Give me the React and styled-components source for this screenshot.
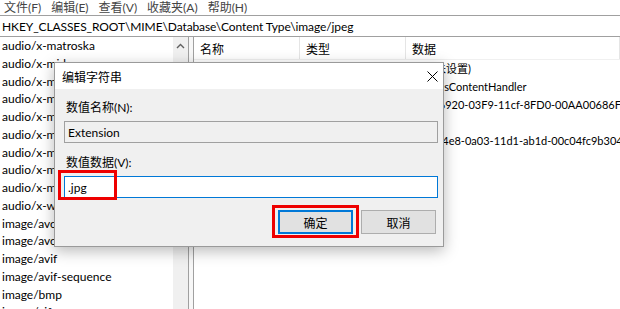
import React from "react";
import styled, { createGlobalStyle } from "styled-components";

const FONT = `"Lato", "Noto Sans CJK SC", sans-serif`;

const Global = createGlobalStyle`
  html, body { margin: 0; padding: 0; background: #fff; }
  body { font-family: ${FONT}; font-size: 12px; color: #000; }
`;

const Window = styled.div`
  position: relative;
  width: 620px;
  height: 309px;
  overflow: hidden;
  background: #fff;
  display: flex;
  flex-direction: column;
`;

const MenuBar = styled.div`
  height: 15px;
  display: flex;
  align-items: center;
  gap: 10px;
  padding-left: 4px;
  color: #444;
  font-size: 12px;
  line-height: 15px;
`;

const MenuItem = styled.span`
  white-space: nowrap;
`;

const AddressBar = styled.div`
  height: 20px;
  border-top: 1px solid #a0a0a0;
  border-bottom: 1px solid #a0a0a0;
  display: flex;
  align-items: center;
  padding-left: 2px;
  font-size: 12px;
  letter-spacing: -0.1px;
  white-space: nowrap;
`;

const Main = styled.div`
  flex: 1;
  display: flex;
  min-height: 0;
`;

const TreePane = styled.div`
  width: 188px;
  display: flex;
  border-right: 1px solid #a0a0a0;
  flex-shrink: 0;
`;

const TreeList = styled.div`
  flex: 1;
  overflow: hidden;
`;

const TreeRow = styled.div`
  height: 17.75px;
  line-height: 17.75px;
  padding-left: 2px;
  white-space: nowrap;
`;

const ScrollBar = styled.div`
  width: 15px;
  background: #f0f0f0;
  display: flex;
  flex-direction: column;
  align-items: center;
`;

const ScrollArrow = styled.div`
  height: 18px;
  display: flex;
  align-items: center;
  justify-content: center;
  width: 100%;
`;

const Splitter = styled.div`
  width: 4px;
  background: #f7f7f7;
  border-right: 1px solid #a0a0a0;
  flex-shrink: 0;
`;

const ValuePane = styled.div`
  flex: 1;
  display: flex;
  flex-direction: column;
  min-width: 0;
`;

const COLS = "106px 106px 1fr";

const HeaderRow = styled.div`
  height: 22px;
  display: grid;
  grid-template-columns: ${COLS};
  border-bottom: 1px solid #f0f0f0;
`;

const HeaderCell = styled.div`
  display: flex;
  align-items: center;
  padding-left: 6px;
  border-right: 1px solid #e5e5e5;
  white-space: nowrap;
  overflow: hidden;
`;

const ValueRow = styled.div`
  height: 18px;
  display: grid;
  grid-template-columns: ${COLS};
  line-height: 18px;
`;

const Cell = styled.div`
  padding-left: ${(p) => (p.$data ? 4 : 6)}px;
  font-size: ${(p) => (p.$data ? 11 : 12)}px;
  white-space: nowrap;
  overflow: hidden;
`;

/* ---------- dialog ---------- */

const Dialog = styled.div`
  position: absolute;
  left: 54px;
  top: 62px;
  width: 388px;
  height: 183px;
  border: 1px solid #9a9a9a;
  background: #f0f0f0;
  box-shadow: 0 4px 14px rgba(0, 0, 0, 0.28);
  display: flex;
  flex-direction: column;
`;

const TitleBar = styled.div`
  height: 26px;
  background: #fff;
  display: flex;
  align-items: center;
  justify-content: space-between;
  padding: 0 5px 0 7px;
  flex-shrink: 0;
`;

const DialogBody = styled.div`
  position: relative;
  flex: 1;
  display: flex;
  flex-direction: column;
  padding: 11px 5px 0 9px;
`;

const Label = styled.div`
  height: 16px;
  line-height: 16px;
  padding-left: 2px;
  margin-top: ${(p) => p.$gap || 0}px;
`;

const Field = styled.div`
  height: 22px;
  box-sizing: border-box;
  margin-top: 5px;
  border: 1px solid ${(p) => (p.$focused ? "#0078d7" : "#a0a0a0")};
  background: ${(p) => (p.$focused ? "#fff" : "#f0f0f0")};
  display: flex;
  align-items: center;
  padding-left: 3px;
`;

const ButtonRow = styled.div`
  margin-top: 12px;
  display: flex;
  justify-content: flex-end;
  gap: 8px;
  padding-right: 2px;
`;

const Button = styled.div`
  width: 75px;
  height: 24px;
  box-sizing: border-box;
  background: #e1e1e1;
  border: ${(p) => (p.$default ? "2px solid #0078d7" : "1px solid #adadad")};
  display: flex;
  align-items: center;
  justify-content: center;
`;

const Highlight = styled.div`
  position: absolute;
  box-sizing: border-box;
  border: 3px solid #ee0000;
  pointer-events: none;
`;

const treeItems = [
  "audio/x-matroska",
  "audio/x-mid",
  "audio/x-midi",
  "audio/x-mpeg",
  "audio/x-mpegurl",
  "audio/x-mpg",
  "audio/x-ms-wax",
  "audio/x-ms-wma",
  "audio/x-ms-wvx",
  "audio/x-wav",
  "image/avci",
  "image/avcs",
  "image/avif",
  "image/avif-sequence",
  "image/bmp",
  "image/gif",
];

const values = [
  ["(默认)", "REG_SZ", "(数值未设置)"],
  ["AutoplayContentTypeHandler", "REG_SZ", "PicturesContentHandler"],
  ["CLSID", "REG_SZ", "{25336920-03F9-11cf-8FD0-00AA00686F13}"],
  ["Extension", "REG_SZ", ".jpg"],
  ["Image Filter CLSID", "REG_SZ", "{607fd4e8-0a03-11d1-ab1d-00c04fc9b304}"],
];

const menus = ["文件(F)", "编辑(E)", "查看(V)", "收藏夹(A)", "帮助(H)"];

export default function App() {
  return (
    <>
      <Global />
      <Window>
        <MenuBar>
          {menus.map((m) => (
            <MenuItem key={m}>{m}</MenuItem>
          ))}
        </MenuBar>
        <AddressBar>HKEY_CLASSES_ROOT\MIME\Database\Content Type\image/jpeg</AddressBar>
        <Main>
          <TreePane>
            <TreeList>
              {treeItems.map((t, i) => (
                <TreeRow key={i}>{t}</TreeRow>
              ))}
            </TreeList>
            <ScrollBar>
              <ScrollArrow>
                <svg width="9" height="6" viewBox="0 0 9 6">
                  <path d="M1 5 L4.5 1.5 L8 5" fill="none" stroke="#606060" strokeWidth="1.4" />
                </svg>
              </ScrollArrow>
            </ScrollBar>
          </TreePane>
          <Splitter />
          <ValuePane>
            <HeaderRow>
              <HeaderCell>名称</HeaderCell>
              <HeaderCell>类型</HeaderCell>
              <HeaderCell>数据</HeaderCell>
            </HeaderRow>
            {values.map((v, i) => (
              <ValueRow key={i}>
                <Cell>{v[0]}</Cell>
                <Cell>{v[1]}</Cell>
                <Cell $data>{v[2]}</Cell>
              </ValueRow>
            ))}
          </ValuePane>
        </Main>

        <Dialog>
          <TitleBar>
            <span>编辑字符串</span>
            <svg width="11" height="11" viewBox="0 0 11 11">
              <path d="M0.5 0.5 L10.5 10.5 M10.5 0.5 L0.5 10.5" stroke="#000" strokeWidth="1" />
            </svg>
          </TitleBar>
          <DialogBody>
            <Label>数值名称(N):</Label>
            <Field>Extension</Field>
            <Label $gap={12}>数值数据(V):</Label>
            <Field $focused>.jpg</Field>
            <ButtonRow>
              <Button $default>确定</Button>
              <Button>取消</Button>
            </ButtonRow>
            <Highlight style={{ left: 3, top: 81, width: 59, height: 30 }} />
            <Highlight style={{ left: 217, top: 116, width: 87, height: 33 }} />
          </DialogBody>
        </Dialog>
      </Window>
    </>
  );
}
